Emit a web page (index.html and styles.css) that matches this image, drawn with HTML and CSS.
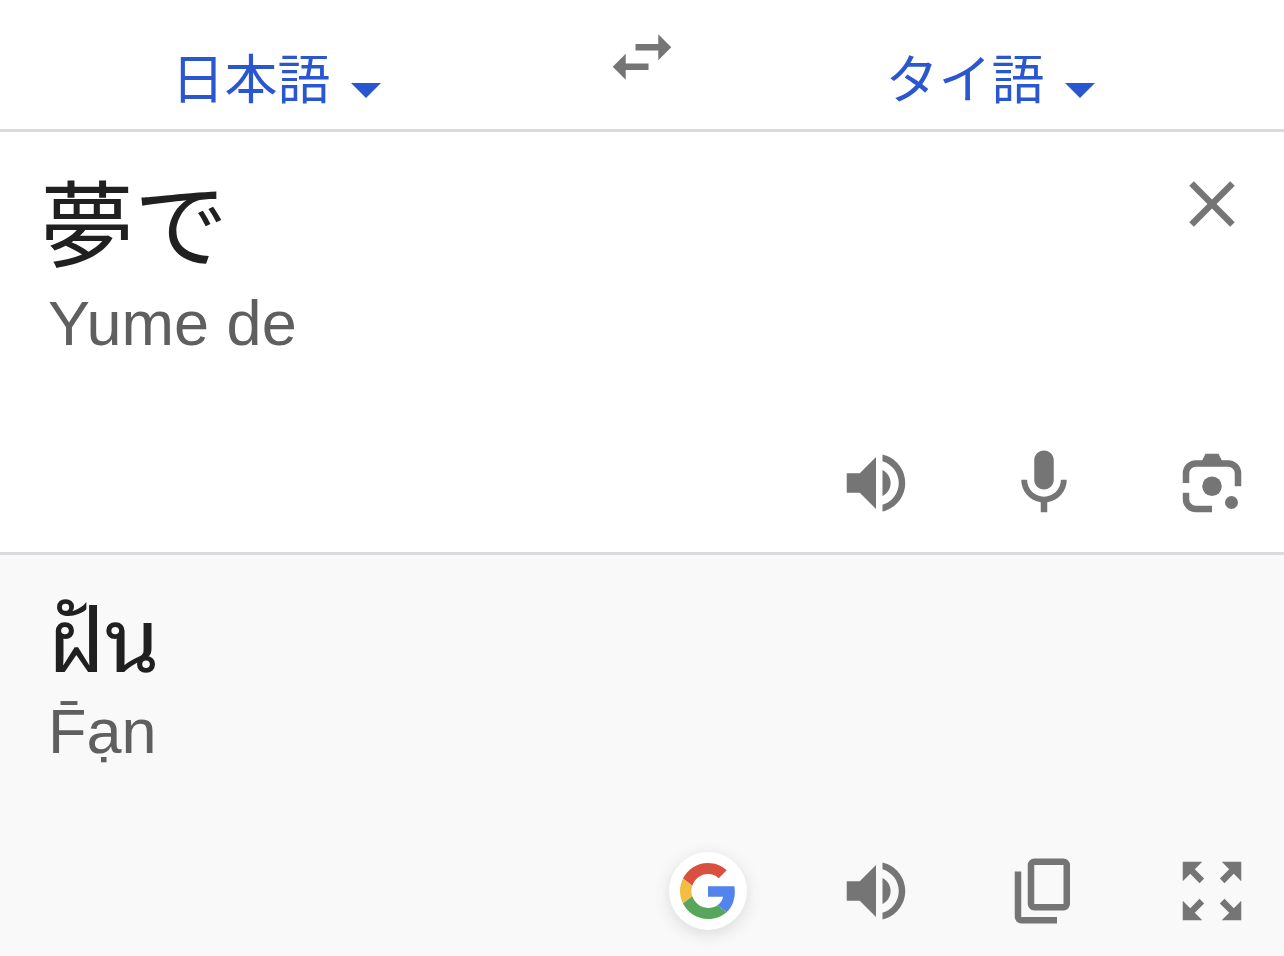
FILE: index.html
```html
<!DOCTYPE html>
<html lang="ja">
<head>
  <meta charset="UTF-8">
  <meta name="viewport" content="width=device-width, initial-scale=1.0">
  <title>翻訳</title>
  <link rel="stylesheet" href="styles.css">
</head>
<body>
  <header class="lang-bar">
    <div class="lang lang-source">
      <select class="lang-select" aria-label="翻訳元の言語">
        <option>日本語</option>
        <option>タイ語</option>
      </select>
      <svg class="arrow" viewBox="0 0 30 15"><path d="M0 0h30L15 15z"/></svg>
    </div>
    <button class="icon-btn swap-btn" type="button" aria-label="言語を入れ替える">
      <svg class="icon" viewBox="0 0 24 24"><path d="M6.99 11L3 15l3.99 4v-3H14v-2H6.99v-3zM21 9l-3.99-4v3H10v2h7.01v3L21 9z"/></svg>
    </button>
    <div class="lang lang-target">
      <select class="lang-select" aria-label="翻訳先の言語">
        <option>タイ語</option>
        <option>日本語</option>
      </select>
      <svg class="arrow" viewBox="0 0 30 15"><path d="M0 0h30L15 15z"/></svg>
    </div>
  </header>

  <main>
    <section class="panel source">
      <div class="source-top">
        <textarea class="source-text" rows="1" aria-label="原文" spellcheck="false">夢で</textarea>
        <button class="icon-btn" type="button" aria-label="クリア">
          <svg class="icon" viewBox="0 0 24 24"><path d="M19 6.41L17.59 5 12 10.59 6.41 5 5 6.41 10.59 12 5 17.59 6.41 19 12 13.41 17.59 19 19 17.59 13.41 12z"/></svg>
        </button>
      </div>
      <p class="reading">Yume de</p>
      <div class="actions">
        <button class="icon-btn" type="button" aria-label="聞く">
          <svg class="icon" viewBox="0 0 24 24"><path d="M3 9v6h4l5 5V4L7 9H3zM14 7.97v8.05c1.48-.73 2.5-2.25 2.5-4.02S15.48 8.71 14 7.97zM14 3.23v2.06c2.89.86 5 3.54 5 6.71s-2.11 5.85-5 6.71v2.06c4.01-.91 7-4.49 7-8.77s-2.99-7.86-7-8.77z"/></svg>
        </button>
        <button class="icon-btn" type="button" aria-label="音声入力">
          <svg class="icon" viewBox="0 0 24 24"><path d="M12 14c1.66 0 3-1.34 3-3V5c0-1.66-1.34-3-3-3S9 3.34 9 5v6c0 1.66 1.34 3 3 3zM17.2 11c0 2.87-2.33 5.2-5.2 5.2S6.8 13.87 6.8 11H5c0 3.53 2.61 6.43 6 6.92V21h2v-3.08c3.39-.49 6-3.39 6-6.92h-1.8z"/></svg>
        </button>
        <button class="icon-btn" type="button" aria-label="カメラで翻訳">
          <svg class="icon" viewBox="0 0 24 24">
            <path d="M3 12V9a4 4 0 0 1 4-4h2l1-2h4l1 2h2a4 4 0 0 1 4 4v4h-2V9a2 2 0 0 0-2-2H7a2 2 0 0 0-2 2v3zM3 15h2v2a2 2 0 0 0 2 2h5v2H7a4 4 0 0 1-4-4z"/>
            <circle cx="12" cy="13" r="3"/>
            <circle cx="18" cy="18" r="2"/>
          </svg>
        </button>
      </div>
    </section>

    <section class="panel result">
      <p class="result-text" lang="th">ฝัน</p>
      <p class="reading">F̄ạn</p>
      <div class="actions">
        <a class="google-btn" href="#" aria-label="Google で検索">
          <svg viewBox="0 0 48 48">
            <path fill="#d95040" d="M24 9.5c3.54 0 6.71 1.22 9.21 3.6l6.85-6.85C35.9 2.38 30.47 0 24 0 14.62 0 6.51 5.38 2.56 13.22l7.98 6.19C12.43 13.72 17.74 9.5 24 9.5z"/>
            <path fill="#5383ec" d="M46.98 24.55c0-1.57-.15-3.09-.38-4.55H24v9.02h12.94c-.58 2.96-2.26 5.48-4.78 7.18l7.73 6c4.51-4.18 7.09-10.36 7.09-17.65z"/>
            <path fill="#f2be42" d="M10.53 28.59c-.48-1.45-.76-2.99-.76-4.59s.27-3.14.76-4.59l-7.98-6.19C.92 16.46 0 20.12 0 24c0 3.88.92 7.54 2.56 10.78l7.97-6.19z"/>
            <path fill="#58a55c" d="M24 48c6.48 0 11.93-2.13 15.89-5.81l-7.73-6c-2.15 1.45-4.92 2.3-8.16 2.3-6.26 0-11.57-4.22-13.47-9.91l-7.98 6.19C6.51 42.62 14.62 48 24 48z"/>
          </svg>
        </a>
        <button class="icon-btn" type="button" aria-label="聞く">
          <svg class="icon" viewBox="0 0 24 24"><path d="M3 9v6h4l5 5V4L7 9H3zM14 7.97v8.05c1.48-.73 2.5-2.25 2.5-4.02S15.48 8.71 14 7.97zM14 3.23v2.06c2.89.86 5 3.54 5 6.71s-2.11 5.85-5 6.71v2.06c4.01-.91 7-4.49 7-8.77s-2.99-7.86-7-8.77z"/></svg>
        </button>
        <button class="icon-btn" type="button" aria-label="コピー">
          <svg class="icon" viewBox="0 0 24 24"><path fill-rule="evenodd" d="M9 2h9a2 2 0 0 1 2 2v12a2 2 0 0 1-2 2H9a2 2 0 0 1-2-2V4a2 2 0 0 1 2-2zM9 4v12h9V4zM3 6h2v14h11v2H5a2 2 0 0 1-2-2z"/></svg>
        </button>
        <button class="icon-btn" type="button" aria-label="全画面表示">
          <svg class="icon" viewBox="0 0 24 24"><path d="M15 3l2.3 2.3-2.89 2.87 1.42 1.42L18.7 6.7 21 9V3zM3 9l2.3-2.3 2.87 2.89 1.42-1.42L6.7 5.3 9 3H3zM9 21l-2.3-2.3 2.89-2.87-1.42-1.42L5.3 17.3 3 15v6zM21 15l-2.3 2.3-2.87-2.89-1.42 1.42 2.89 2.87L15 21h6z"/></svg>
        </button>
      </div>
    </section>
  </main>
</body>
</html>
```
FILE: styles.css
```css
/* General Styling */
* {
  box-sizing: border-box;
}

body {
  margin: 0;
  min-height: 100vh;
  display: flex;
  flex-direction: column;
  font-family: "Liberation Sans", "Noto Sans CJK JP", sans-serif;
  color: #202020;
  background: #fff;
}

p {
  margin: 0;
}

/* Language bar */
.lang-bar {
  display: grid;
  grid-template-columns: 1fr 180px 1fr;
  height: 132px;
  border-bottom: 3px solid #dadbdf;
}

.lang {
  display: flex;
  justify-content: center;
  align-items: center;
  gap: 20px;
  padding-top: 22px;
}

.lang-target {
  padding-right: 36px;
}

.lang-select {
  appearance: none;
  border: none;
  padding: 0;
  background: none;
  color: #2a56d0;
  font-family: "Noto Sans CJK JP", sans-serif;
  font-size: 53px;
  font-weight: 400;
  line-height: 80px;
}

.arrow {
  width: 30px;
  height: 15px;
  margin-top: 30px;
  fill: #2a56d0;
}

/* Buttons */
.icon-btn {
  display: block;
  width: 78px;
  height: 78px;
  padding: 0;
  border: none;
  background: none;
  cursor: pointer;
}

.icon {
  display: block;
  width: 78px;
  height: 78px;
  fill: #757575;
}

.swap-btn {
  justify-self: center;
  margin-top: 18px;
}

/* Panels */
main {
  flex: 1;
  display: flex;
  flex-direction: column;
}

.panel {
  display: flex;
  flex-direction: column;
  padding: 33px 33px 30px 40px;
}

.source {
  min-height: 423px;
  border-bottom: 3px solid #dadbdf;
}

.source-top {
  display: flex;
  align-items: flex-start;
}

.source-text {
  flex: 1;
  height: 120px;
  padding: 0;
  border: none;
  outline: none;
  resize: none;
  overflow: hidden;
  background: none;
  color: #202020;
  font-family: "Noto Sans CJK JP", sans-serif;
  font-size: 94px;
  line-height: 108px;
}

.reading {
  color: #5f5f5f;
  font-size: 63px;
  line-height: 76px;
  padding-left: 8px;
}

.actions {
  display: flex;
  justify-content: flex-end;
  align-items: center;
  gap: 90px;
  margin-top: auto;
}

.result {
  flex: 1;
  padding-top: 18px;
  padding-bottom: 26px;
  background: #f9f9f9;
}

.result-text {
  padding-left: 8px;
  font-family: "Noto Sans Thai Looped", "Loma", "Noto Sans Thai", sans-serif;
  font-size: 88px;
  line-height: 120px;
}

.google-btn {
  display: flex;
  justify-content: center;
  align-items: center;
  width: 78px;
  height: 78px;
  border-radius: 50%;
  background: #fff;
  box-shadow: 0 4px 16px rgba(60, 64, 67, 0.16);
}

.google-btn svg {
  width: 56px;
  height: 56px;
}
```
